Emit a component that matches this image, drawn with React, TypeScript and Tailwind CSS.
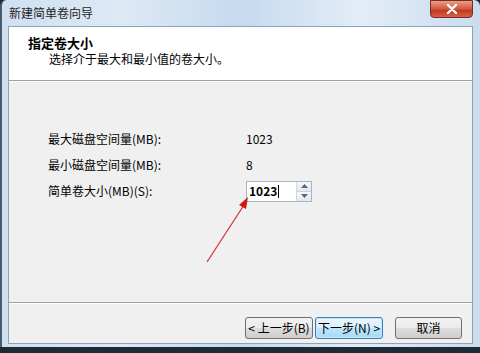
import React from "react";

export default function App() {
  const font = { fontFamily: '"Noto Sans CJK SC", "Noto Sans", sans-serif' };
  return (
    <div className="relative w-[480px] h-[353px] overflow-hidden bg-[#1e2a36]" style={font}>
      <div className="absolute inset-0 bottom-[6px] rounded-t-[6px] border-l-2 border-[#4b5b6b] bg-[linear-gradient(90deg,#cfe0f1_0%,#dde9f5_25%,#c6daee_50%,#e3edf7_75%,#cadcee_100%)] flex flex-col">
        {/* title bar */}
        <div className="h-[26px] flex items-center pl-[7px] relative shrink-0">
          <span className="text-[12px] text-[#1e1e1e] leading-none">新建简单卷向导</span>
          <div className="absolute right-[7px] top-0 w-[43px] h-[18px] rounded-b-[4px] border border-[#7a2a1e] bg-[linear-gradient(180deg,#e8a08c_0%,#d4563e_50%,#c03a22_60%,#d8624a_100%)] flex items-center justify-center">
            <svg width="12" height="10" viewBox="0 0 12 10">
              <path d="M2 1 L10 9 M10 1 L2 9" stroke="#ffffff" strokeWidth="2.4" strokeLinecap="round" />
            </svg>
          </div>
        </div>
        {/* client */}
        <div className="flex-1 ml-[6px] mr-[7px] mb-[3px] border border-[#8ea3b8] flex flex-col bg-[#f0f0f0]">
          <div className="h-[54px] bg-white border-b border-[#a0a0a0] shadow-[0_1px_0_#ffffff] pl-[19px] pt-[8px] shrink-0">
            <div className="text-[13px] font-bold text-black leading-[16px]">指定卷大小</div>
            <div className="text-[12px] text-black leading-[16px] pl-[21px]">选择介于最大和最小值的卷大小。</div>
          </div>
          <div className="flex-1 pl-[39px] pt-[45px] text-[12px] text-black">
            <div className="flex items-center h-[26px]">
              <span className="w-[198px]">最大磁盘空间量(MB):</span>
              <span>1023</span>
            </div>
            <div className="flex items-center h-[26px]">
              <span className="w-[198px]">最小磁盘空间量(MB):</span>
              <span>8</span>
            </div>
            <div className="flex items-center h-[26px]">
              <span className="w-[198px]">简单卷大小(MB)(S):</span>
              <div className="flex h-[21px] w-[66px] border border-[#a9b4c2] bg-white">
                <div className="flex-1 flex items-center pl-[2px] font-bold text-[12px]">
                  1023<span className="inline-block w-px h-[13px] bg-black ml-px" />
                </div>
                <div className="w-[15px] flex flex-col border-l border-[#d0d6de]">
                  <div className="flex-1 flex items-center justify-center bg-[linear-gradient(180deg,#f6f8fa,#e3e8ee)] border-b border-[#c8d0da]">
                    <svg width="7" height="4" viewBox="0 0 7 4"><path d="M0 4 L3.5 0 L7 4Z" fill="#56657a" /></svg>
                  </div>
                  <div className="flex-1 flex items-center justify-center bg-[linear-gradient(180deg,#f6f8fa,#e3e8ee)]">
                    <svg width="7" height="4" viewBox="0 0 7 4"><path d="M0 0 L3.5 4 L7 0Z" fill="#56657a" /></svg>
                  </div>
                </div>
              </div>
            </div>
          </div>
          <div className="h-[41px] border-t border-[#a0a0a0] shadow-[inset_0_1px_0_#ffffff] flex items-start pt-[14px] pl-[236px] shrink-0 text-[12px]">
            <button className="w-[68px] h-[22px] rounded-[3px] border border-[#707070] bg-[linear-gradient(180deg,#f2f2f2_0%,#ebebeb_50%,#dddddd_51%,#cfcfcf_100%)] flex items-center justify-center leading-none">
              &lt; 上一步(B)
            </button>
            <button className="ml-[2px] w-[68px] h-[22px] rounded-[3px] border border-[#3c7fb1] shadow-[inset_0_0_0_1px_#c6e6fa] bg-[linear-gradient(180deg,#eaf6fd_0%,#d9f0fc_50%,#bee6fd_51%,#a7d9f5_100%)] flex items-center justify-center leading-none">
              下一步(N) &gt;
            </button>
            <button className="ml-[12px] w-[67px] h-[22px] rounded-[3px] border border-[#707070] bg-[linear-gradient(180deg,#f2f2f2_0%,#ebebeb_50%,#dddddd_51%,#cfcfcf_100%)] flex items-center justify-center leading-none">
              取消
            </button>
          </div>
        </div>
      </div>
      {/* red arrow annotation */}
      <svg className="absolute left-0 top-0 pointer-events-none" width="480" height="353" viewBox="0 0 480 353">
        <line x1="207" y1="262" x2="244" y2="205" stroke="#d23a3a" strokeWidth="1.3" />
        <path d="M248 197 L239 205 L246 209 Z" fill="#d01818" />
      </svg>
    </div>
  );
}
